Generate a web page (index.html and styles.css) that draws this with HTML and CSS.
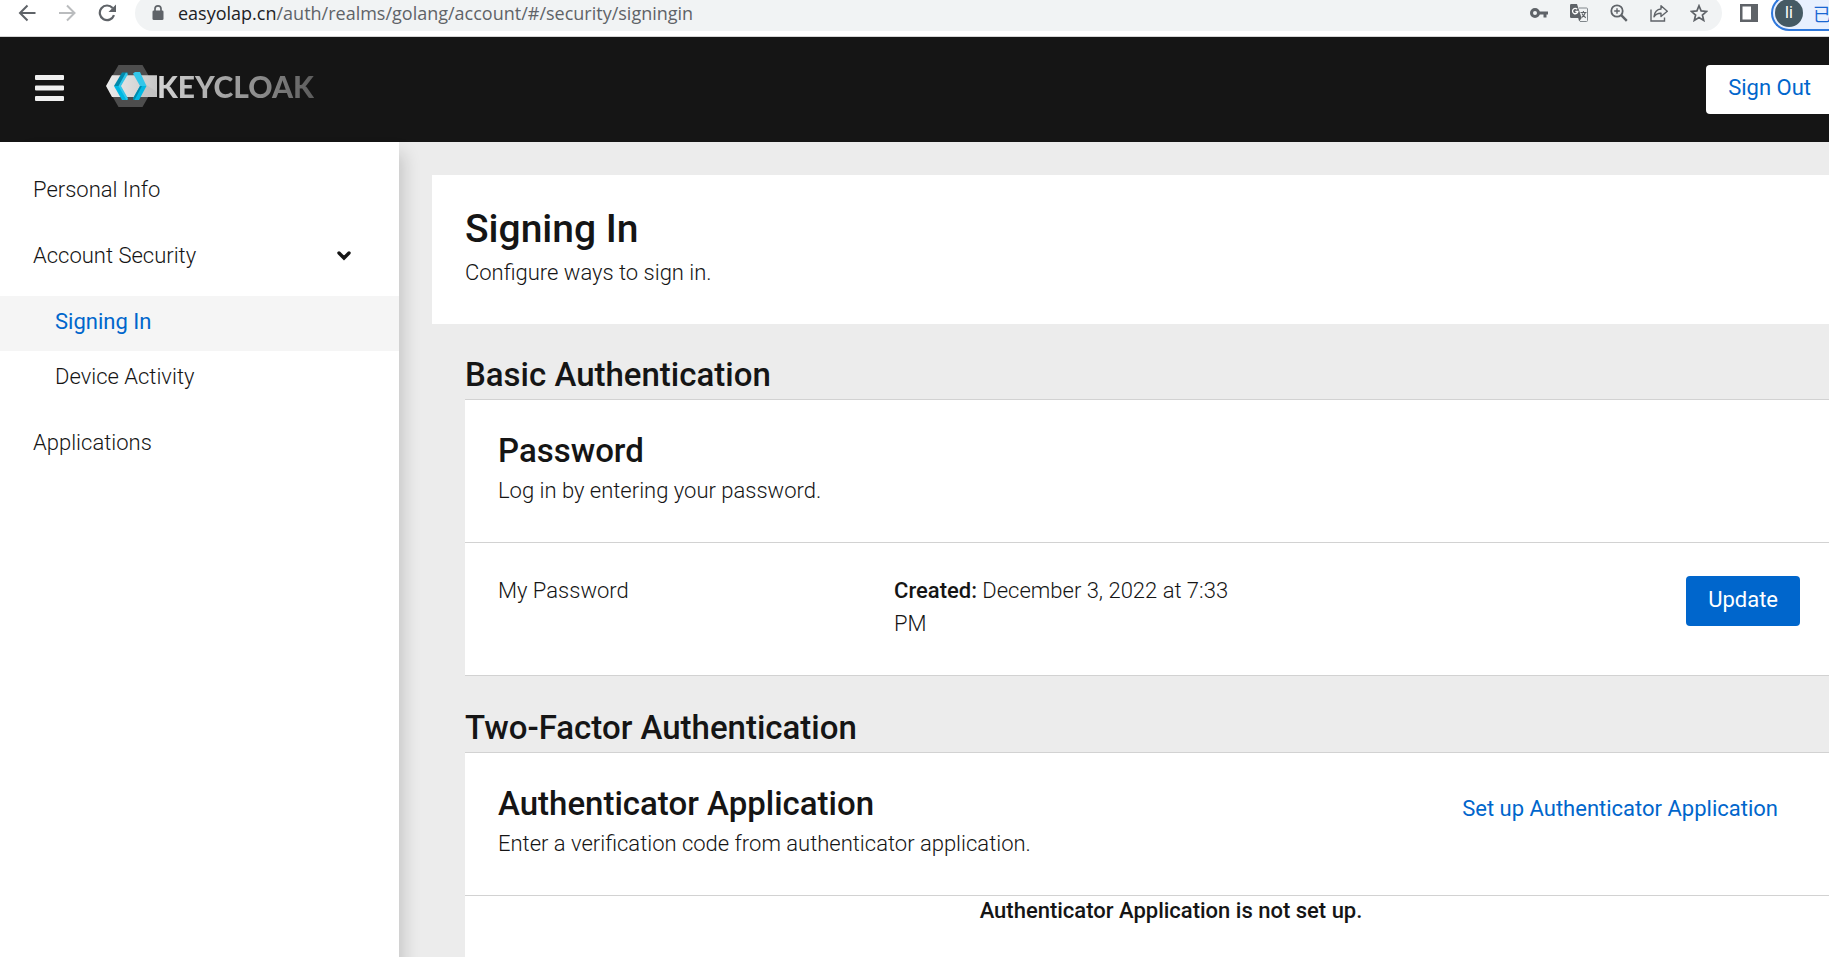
FILE: index.html
```html
<!DOCTYPE html>
<html lang="en">
<head>
<meta charset="utf-8">
<title>Keycloak Account Management</title>
<link rel="stylesheet" href="styles.css">
</head>
<body>
<div class="browser">
  <button class="icon-btn" aria-label="Back"><svg viewBox="0 0 18 18"><path d="M17.500 9H2M9.500 1.500 2 9 9.500 16.500" fill="none" stroke="#5f6368" stroke-width="2"/></svg></button>
  <button class="icon-btn" aria-label="Forward"><svg viewBox="0 0 18 18"><path d="M1 9h15.500M9 1.500 16.500 9 9 16.500" fill="none" stroke="#babcbe" stroke-width="2"/></svg></button>
  <button class="icon-btn" aria-label="Reload"><svg viewBox="0 0 18 18"><path d="M14.600 4A7.300 7.300 0 1 0 16 11.200" fill="none" stroke="#5f6368" stroke-width="2.200"/><path d="M18 .5V8h-7.500z" fill="#5f6368"/></svg></button>
  <div class="omnibox">
    <svg class="lock" viewBox="0 0 14 18" aria-hidden="true"><rect x="1.500" y="6.500" width="11" height="9.500" rx="1.300" fill="#5f6368"/><path d="M4 7V4.800a3 3 0 0 1 6 0V7" fill="none" stroke="#5f6368" stroke-width="1.700"/></svg>
    <div class="url"><span class="host">easyolap.cn</span>/auth/realms/golang/account/#/security/signingin</div>
    <button class="icon-btn" aria-label="Passwords"><svg viewBox="0 0 18 18"><path fill="#5f6368" fill-rule="evenodd" d="M5 4a5 5 0 1 1 0 10A5 5 0 0 1 5 4zm0 3a2 2 0 1 0 0 4 2 2 0 0 0 0-4z"/><path fill="#5f6368" d="M8.500 7.500H18v3h-1.500v3h-3v-3h-5z"/></svg></button>
    <button class="icon-btn" aria-label="Translate"><svg viewBox="0 0 18 18"><path d="M9 4h7.500q1 0 1 1v11.500q0 1-1 1H10" fill="none" stroke="#80868b"/><path d="M1.200 0H7l4.600 14H1.200Q0 14 0 12.800V1.200Q0 0 1.200 0z" fill="#5f6368"/><path d="M8.200 14h3.400l-2.400 3.600z" fill="#5f6368"/><path d="M7.200 5.200A2.700 2.700 0 1 0 7.900 7.500H5.300" fill="none" stroke="#fff" stroke-width="1.300"/><path d="M10.500 8.500h6M13.400 7v1.500M15.300 8.500q-.8 3-3.700 5M12 9.500q1 2.500 3.800 4.300" fill="none" stroke="#5f6368" stroke-width="1.100"/></svg></button>
    <button class="icon-btn" aria-label="Zoom"><svg viewBox="0 0 18 18"><circle cx="7" cy="7" r="5.700" fill="none" stroke="#5f6368" stroke-width="1.800"/><path d="m11.200 11.200 5.600 5.600" stroke="#5f6368" stroke-width="2.400"/><path d="M4.200 7h5.600M7 4.200v5.600" stroke="#5f6368" stroke-width="1.400"/></svg></button>
    <button class="icon-btn" aria-label="Share"><svg viewBox="0 0 18 18"><path d="M1 5.500V17h13.500v-3.500" fill="none" stroke="#5f6368" stroke-width="1.400"/><path d="M11 1.800 17.300 7.200 11 12.500V9.200Q6.500 9 4 12.800 4.800 5.500 11 5z" fill="none" stroke="#5f6368" stroke-width="1.400" stroke-linejoin="round"/></svg></button>
    <button class="icon-btn" aria-label="Bookmark"><svg viewBox="0 0 18 18"><path d="m9 1.800 2.100 5.100 5.500.5-4.200 3.600 1.300 5.400L9 13.500l-4.700 2.900L5.600 11 1.400 7.400l5.500-.5z" fill="none" stroke="#5f6368" stroke-width="1.700"/></svg></button>
  </div>
  <button class="icon-btn panel" aria-label="Side panel"><svg viewBox="0 0 18 18"><path fill="#5f6368" fill-rule="evenodd" d="M0 0h18v18H0zM2.500 2.500v13H11v-13z"/></svg></button>
  <button class="profile"><span class="avatar">li</span><span>已暂停</span></button>
</div>

<header class="masthead">
  <button class="menu" aria-label="Global navigation"><svg viewBox="0 0 29 26"><path fill="#f0f0f0" d="M1 0h27q1 0 1 1v3q0 1-1 1H1Q0 5 0 4V1q0-1 1-1zM1 10.500h27q1 0 1 1v3q0 1-1 1H1q-1 0-1-1v-3q0-1 1-1zM1 21h27q1 0 1 1v3q0 1-1 1H1q-1 0-1-1v-3q0-1 1-1z"/></svg></button>
  <a class="brand" href="#">
    <svg class="mark" viewBox="0 0 51 42" aria-hidden="true">
      <defs><linearGradient id="band"><stop offset="0" stop-color="#ececec"/><stop offset="1" stop-color="#c8c8c8"/></linearGradient></defs>
      <path d="M12.500 0h24L48.500 21l-12 21h-24L.5 21z" fill="#4d4d4d"/>
      <path d="M6 10.300h45v21.700H6L0 21z" fill="url(#band)"/>
      <path d="m30 32 9-13 12 8v5z" fill="#bdbdbd" opacity=".6"/>
      <path d="M16 7.500h6L14.300 21 8 21z" fill="#0089ab"/>
      <path d="M8 21h6.300L22 35h-6z" fill="#00b8e3"/>
      <path d="M20 7.500 22 9 15 21l7 12.500-1.500 1.500L12.500 21z" fill="#33c6e9"/>
      <path d="M27 8.500 29 7h5l6.500 14H34z" fill="#33c6e9"/>
      <path d="M34 21h6.500L33 35h-5l-1-1.500z" fill="#00b8e3"/>
      <path d="m34 21-7 12.500 1.500 1.500L36 21z" fill="#0089ab"/>
    </svg>
    <span class="wordmark">KEYCLOAK</span>
  </a>
  <button class="signout">Sign Out</button>
</header>

<div class="page">
  <nav class="sidebar" aria-label="Account">
    <ul class="nav">
      <li><a class="nav-link" href="#">Personal Info</a></li>
      <li>
        <button class="nav-link" aria-expanded="true">Account Security <svg class="chevron" viewBox="0 0 14 10" aria-hidden="true"><path d="m2 2 5 5 5-5" fill="none" stroke="#151515" stroke-width="3.400" stroke-linecap="round"/></svg></button>
        <ul class="subnav">
          <li><a class="nav-link current" href="#" aria-current="page">Signing In</a></li>
          <li><a class="nav-link" href="#">Device Activity</a></li>
        </ul>
      </li>
      <li><a class="nav-link" href="#">Applications</a></li>
    </ul>
  </nav>
  <main class="main">
    <div class="intro">
      <h1>Signing In</h1>
      <p>Configure ways to sign in.</p>
    </div>
    <section class="section">
      <h2 class="title">Basic Authentication</h2>
      <div class="row head">
        <div>
          <h3 class="title">Password</h3>
          <p>Log in by entering your password.</p>
        </div>
      </div>
      <div class="row credential">
        <div>My Password</div>
        <div><strong>Created:</strong> December 3, 2022 at 7:33 PM</div>
        <button class="update">Update</button>
      </div>
    </section>
    <section class="section">
      <h2 class="title">Two-Factor Authentication</h2>
      <div class="row head">
        <div>
          <h3 class="title">Authenticator Application</h3>
          <p>Enter a verification code from authenticator application.</p>
        </div>
        <a class="setup" href="#">Set up Authenticator Application</a>
      </div>
      <div class="empty"><strong>Authenticator Application is not set up.</strong></div>
    </section>
  </main>
</div>
</body>
</html>
```
FILE: styles.css
```css
* { box-sizing: border-box; }
body {
  margin: 0;
  height: 100vh;
  display: flex;
  flex-direction: column;
  overflow: hidden;
  background: #ececec;
  color: #151515;
  font: 300 22px/33px Roboto, "Liberation Sans", sans-serif;
}
h1, h2, h3, p, ul { margin: 0; padding: 0; }
ul { list-style: none; }
a { text-decoration: none; color: #06c; }
button { font: inherit; color: inherit; border: 0; padding: 0; background: none; cursor: pointer; }
svg { display: block; }
strong { font-weight: 500; }

/* Browser toolbar */
.browser {
  display: flex;
  align-items: center;
  gap: 22px;
  flex: none;
  height: 37px;
  padding: 0 0 10px 18px;
  border-bottom: 1px solid #d5d5d5;
  background: #fff;
  overflow: hidden;
}
.icon-btn { flex: none; width: 18px; height: 18px; }
.icon-btn svg { width: 18px; height: 18px; }
.omnibox {
  display: flex;
  align-items: center;
  gap: 22px;
  flex: 1;
  min-width: 0;
  height: 36px;
  margin: 0 -4px 0 -3px;
  padding: 0 14px 0 16px;
  border-radius: 18px;
  background: #f1f3f4;
}
.lock { width: 14px; height: 18px; margin-right: -9px; }
.url {
  flex: 1;
  white-space: nowrap;
  color: #5f6368;
  font: 400 18px/24px "Open Sans", "Noto Sans", sans-serif;
}
.host { color: #202124; }
.profile {
  display: flex;
  align-items: center;
  gap: 10px;
  flex: 0 0 58px;
  height: 36px;
  margin-left: -9px;
  padding: 2px;
  border: 2px solid #3079dc;
  border-right: 0;
  border-radius: 18px 0 0 18px;
  background: #e8f0fe;
  color: #1a67d2;
  font: 400 18px/24px "Noto Sans CJK SC", sans-serif;
  white-space: nowrap;
  overflow: hidden;
}
.avatar {
  flex: none;
  width: 28px;
  height: 28px;
  border-radius: 50%;
  background: #455a64;
  color: #fff;
  font: 400 16px/27px Roboto, sans-serif;
  text-align: center;
}

/* Masthead */
.masthead {
  display: flex;
  align-items: center;
  flex: none;
  height: 105px;
  padding-left: 35px;
  background: #151515;
  overflow: hidden;
}
.menu { padding-bottom: 4px; }
.menu svg { width: 29px; height: 26px; }
.brand { display: flex; align-items: center; margin-left: 42px; margin-right: auto; padding-bottom: 8px; }
.mark { width: 51px; height: 42px; }
.wordmark {
  font: 900 30px/42px Lato, sans-serif;
  background: linear-gradient(90deg, #d4d4d4, #8c8c8c 65%, #5c5c5c);
  background-clip: text;
  color: transparent;
}
.signout {
  height: 49px;
  margin-right: -4px;
  padding: 0 22px 4px;
  border-radius: 4px;
  background: #fff;
  color: #06c;
  font-weight: 400;
}

/* Layout */
.page { display: flex; flex: 1; min-height: 0; }
.sidebar {
  flex: 0 0 399px;
  margin-bottom: -33px;
  padding-top: 22px;
  background: #fff;
  box-shadow: 16px 0 16px -11px rgba(3, 3, 3, .16);
}
.nav { display: flex; flex-direction: column; gap: 11px; }
.nav-link {
  display: flex;
  align-items: center;
  justify-content: space-between;
  width: 100%;
  padding: 9px 48px 13px 33px;
  color: #151515;
  text-align: left;
}
.chevron { width: 14px; height: 10px; }
.subnav { margin-top: 11px; }
.subnav .nav-link { padding-left: 55px; }
.subnav .current { background: #f5f5f5; color: #06c; font-weight: 400; }

.main { flex: 1; min-width: 0; padding: 33px 0 0 33px; overflow: hidden; }
.intro { padding: 29px 33px 35px; background: #fff; }
h1 { margin-bottom: 2px; font-size: 39px; line-height: 50px; font-weight: 500; }
.title { font-size: 33px; line-height: 43px; font-weight: 500; }
.section { padding-left: 33px; }
.section + .section { margin-top: 1px; }
.section > .title { padding: 29px 0 3px; border-bottom: 1px solid #d2d2d2; }
.row { padding: 29px 29px 35px 33px; border-bottom: 1px solid #d2d2d2; background: #fff; }
.head { display: flex; justify-content: space-between; align-items: flex-start; }
.head .title { margin-bottom: 2px; }
.setup { padding: 10px 22px 0; font-weight: 400; }
.credential {
  display: grid;
  grid-template-columns: 1fr 1fr 1fr auto;
  column-gap: 33px;
  align-items: start;
  padding-top: 31px;
}
.update {
  grid-column: 4;
  height: 50px;
  margin-top: 2px;
  padding: 0 22px 4px;
  border-radius: 4px;
  background: #06c;
  color: #fff;
  font-weight: 400;
}
.empty {
  height: 100vh;
  padding-left: 48px;
  background: #fff;
  line-height: 30px;
  text-align: center;
}
```
